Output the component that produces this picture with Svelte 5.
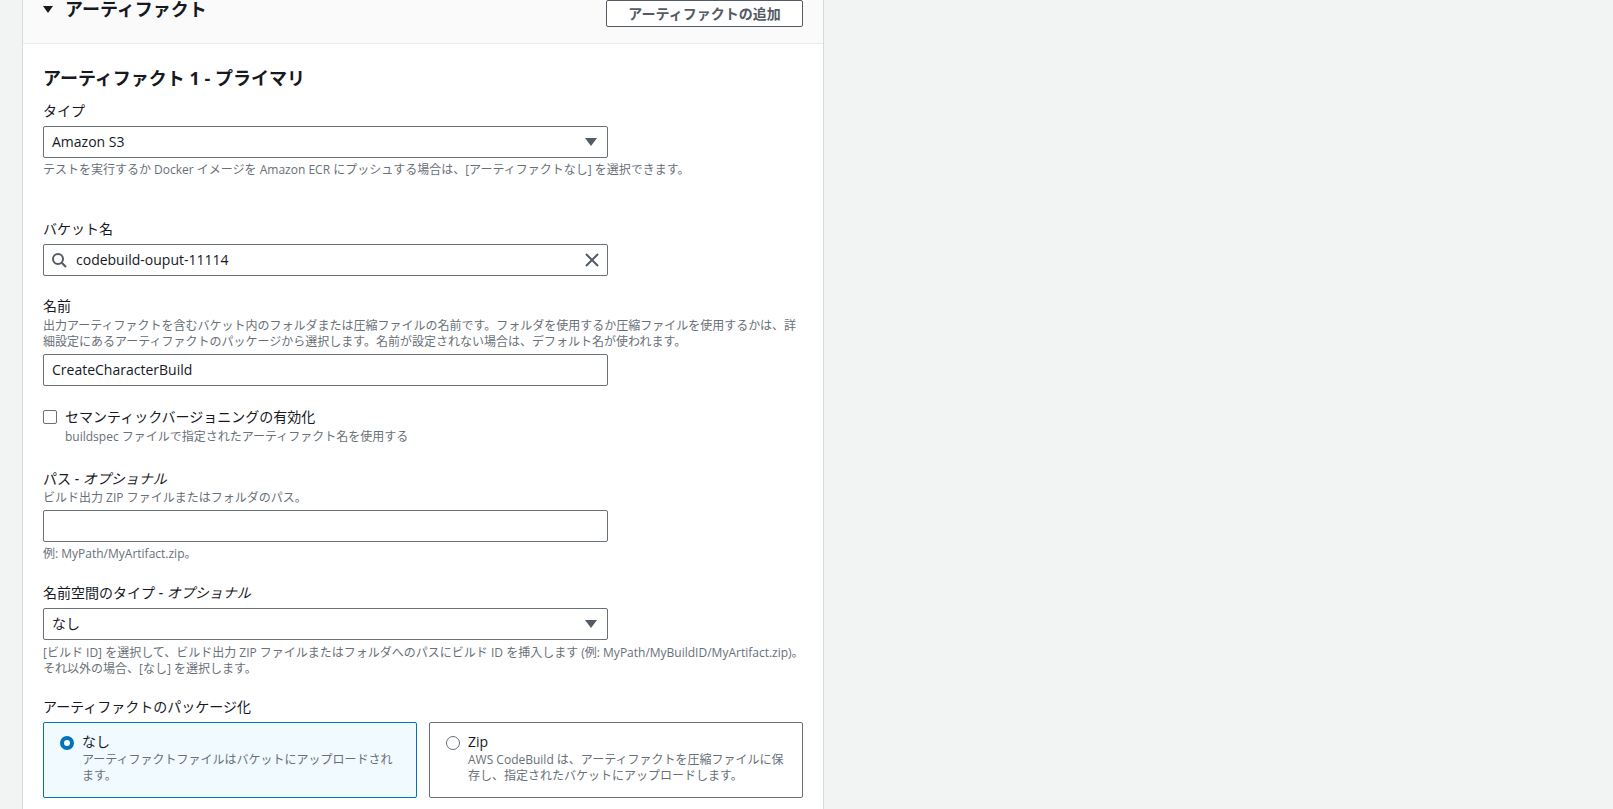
<script>
  let packaging = $state("none");
</script>

<main class="page">
  <section class="panel">
    <header class="panel-head">
      <h2><span class="caret"></span>アーティファクト</h2>
      <button class="add-btn">アーティファクトの追加</button>
    </header>

    <div class="panel-body">
      <h3>アーティファクト 1 - プライマリ</h3>

      <div class="field type-field">
        <span class="label">タイプ</span>
        <div class="control select">Amazon S3<span class="arrow"></span></div>
        <p class="hint after wide">テストを実行するか Docker イメージを Amazon ECR にプッシュする場合は、[アーティファクトなし] を選択できます。</p>
      </div>

      <div class="field bucket-field">
        <span class="label">バケット名</span>
        <div class="control search">
          <svg class="search-icon" viewBox="0 0 16 16" width="16" height="16" fill="none" stroke="#545b64" stroke-width="2"><circle cx="7" cy="7" r="5"/><path d="M10.7 10.7 15 15"/></svg>
          <span class="grow">codebuild-ouput-11114</span>
          <svg viewBox="0 0 16 16" width="16" height="16" fill="none" stroke="#545b64" stroke-width="2"><path d="M2 2l12 12M14 2 2 14"/></svg>
        </div>
      </div>

      <div class="field name-field">
        <span class="label">名前</span>
        <p class="hint wide">出力アーティファクトを含むバケット内のフォルダまたは圧縮ファイルの名前です。フォルダを使用するか圧縮ファイルを使用するかは、詳細設定にあるアーティファクトのパッケージから選択します。名前が設定されない場合は、デフォルト名が使われます。</p>
        <div class="control">CreateCharacterBuild</div>
      </div>

      <div class="check-row">
        <span class="checkbox"></span>
        <div>
          <div class="check-label">セマンティックバージョニングの有効化</div>
          <p class="hint check-hint">buildspec ファイルで指定されたアーティファクト名を使用する</p>
        </div>
      </div>

      <div class="field path-field">
        <span class="label"><span>パス</span> <i>- オプショナル</i></span>
        <p class="hint">ビルド出力 ZIP ファイルまたはフォルダのパス。</p>
        <div class="control"></div>
        <p class="hint after">例: MyPath/MyArtifact.zip。</p>
      </div>

      <div class="field ns-field">
        <span class="label">名前空間のタイプ <i>- オプショナル</i></span>
        <div class="control select">なし<span class="arrow"></span></div>
        <p class="hint ns-hint">[ビルド ID] を選択して、ビルド出力 ZIP ファイルまたはフォルダへのパスにビルド ID を挿入します (例: MyPath/MyBuildID/MyArtifact.zip)。それ以外の場合、[なし] を選択します。</p>
      </div>

      <div class="field pkg-field">
        <span class="label">アーティファクトのパッケージ化</span>
        <div class="tiles">
          <button class="tile" class:selected={packaging === "none"} onclick={() => (packaging = "none")}>
            <span class="radio"></span>
            <span class="tile-text">
              <span class="tile-title">なし</span>
              <span class="hint">アーティファクトファイルはバケットにアップロードされます。</span>
            </span>
          </button>
          <button class="tile" class:selected={packaging === "zip"} onclick={() => (packaging = "zip")}>
            <span class="radio"></span>
            <span class="tile-text">
              <span class="tile-title">Zip</span>
              <span class="hint">AWS CodeBuild は、アーティファクトを圧縮ファイルに保存し、指定されたバケットにアップロードします。</span>
            </span>
          </button>
        </div>
      </div>
    </div>
  </section>
</main>

<style>
  :global(body) {
    background: #f2f3f3;
    color: #16191f;
    font-family: "Open Sans", "Noto Sans CJK JP", sans-serif;
    font-size: 14px;
    line-height: 20px;
  }

  .page {
    height: 809px;
    overflow: hidden;
  }

  .panel {
    width: 800px;
    height: 809px;
    margin-left: 22px;
    background: #fff;
    border-left: 1px solid #d5dbdb;
    border-right: 1px solid #d5dbdb;
  }

  .panel-head {
    display: flex;
    justify-content: space-between;
    height: 44px;
    padding: 0 20px;
    background: #fafafa;
    border-bottom: 1px solid #eaeded;
    box-sizing: border-box;
  }

  h2 {
    display: flex;
    align-items: center;
    gap: 12px;
    margin: -4px 0 0;
    height: 26px;
    font-size: 18px;
    font-weight: 700;
  }

  .caret {
    width: 0;
    height: 0;
    border-left: 5px solid transparent;
    border-right: 5px solid transparent;
    border-top: 7px solid #16191f;
  }

  .add-btn {
    width: 197px;
    height: 27px;
    margin: 0;
    padding: 0;
    background: #fff;
    border: 1px solid #545b64;
    border-radius: 2px;
    color: #545b64;
    font: inherit;
    font-weight: 700;
  }

  .panel-body {
    padding: 23px 20px 0;
  }

  h3 {
    margin: 0;
    font-size: 18px;
    line-height: 22px;
    font-weight: 700;
  }

  .field {
    width: 565px;
  }

  .label {
    display: block;
    line-height: 20px;
  }

  .label + .control {
    margin-top: 5px;
  }

  .label + .hint {
    margin-top: 1px;
  }

  i {
    font-style: italic;
  }

  .hint {
    display: block;
    margin: 0;
    font-size: 12px;
    line-height: 16px;
    color: #687078;
  }

  .hint.after {
    margin-top: 4px;
  }

  .wide {
    width: 760px;
  }

  .ns-hint {
    width: 770px;
    margin-top: 5px;
  }

  .control {
    display: flex;
    align-items: center;
    box-sizing: border-box;
    width: 565px;
    height: 32px;
    padding: 0 8px;
    border: 1px solid #687078;
    border-radius: 2px;
    background: #fff;
  }

  .select {
    justify-content: space-between;
    padding-right: 10px;
  }

  .arrow {
    width: 0;
    height: 0;
    border-left: 6px solid transparent;
    border-right: 6px solid transparent;
    border-top: 8px solid #545b64;
  }

  .search {
    gap: 9px;
    padding-left: 7px;
    padding-right: 7px;
  }

  .search-icon {
    flex: none;
  }

  .grow {
    flex: 1;
  }

  .type-field { margin-top: 12px; }
  .bucket-field { margin-top: 41px; }
  .name-field { margin-top: 20px; }
  .name-field .hint { margin-top: 2px; }
  .name-field .control { margin-top: 4px; }
  .path-field { margin-top: 24px; }
  .path-field .control { margin-top: 4px; }
  .ns-field { margin-top: 21px; }
  .pkg-field { margin-top: 20px; width: auto; }

  .check-row {
    display: flex;
    gap: 8px;
    margin-top: 21px;
  }

  .check-hint {
    margin-top: 2px;
  }

  .checkbox {
    flex: none;
    box-sizing: border-box;
    width: 14px;
    height: 14px;
    margin-top: 3px;
    border: 1px solid #687078;
    border-radius: 2px;
    background: #fff;
  }

  .tiles {
    display: grid;
    grid-template-columns: 1fr 1fr;
    gap: 12px;
    margin-top: 5px;
  }

  .tile {
    display: flex;
    gap: 8px;
    box-sizing: border-box;
    height: 76px;
    padding: 9px 15px 9px 16px;
    background: #fff;
    border: 1px solid #687078;
    border-radius: 2px;
    color: inherit;
    font: inherit;
    text-align: left;
  }

  .tile.selected {
    background: #f1faff;
    border-color: #0073bb;
  }

  .radio {
    flex: none;
    box-sizing: border-box;
    width: 14px;
    height: 14px;
    margin-top: 4px;
    border: 1px solid #687078;
    border-radius: 50%;
    background: #fff;
  }

  .selected .radio {
    border: 4px solid #0073bb;
  }

  .tile-title {
    display: block;
  }
</style>
